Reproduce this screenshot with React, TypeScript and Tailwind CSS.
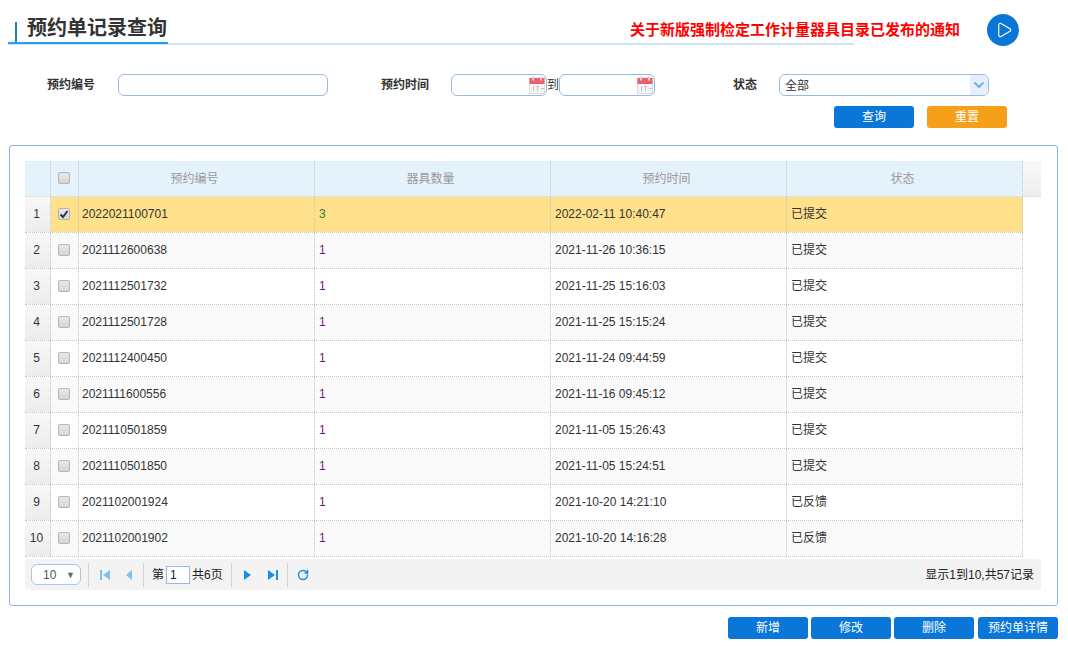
import { ChevronDown, Play, RotateCw } from 'lucide-react';

const rows = [
  ['2022021100701', '3', '2022-02-11 10:40:47', '已提交'],
  ['2021112600638', '1', '2021-11-26 10:36:15', '已提交'],
  ['2021112501732', '1', '2021-11-25 15:16:03', '已提交'],
  ['2021112501728', '1', '2021-11-25 15:15:24', '已提交'],
  ['2021112400450', '1', '2021-11-24 09:44:59', '已提交'],
  ['2021111600556', '1', '2021-11-16 09:45:12', '已提交'],
  ['2021110501859', '1', '2021-11-05 15:26:43', '已提交'],
  ['2021110501850', '1', '2021-11-05 15:24:51', '已提交'],
  ['2021102001924', '1', '2021-10-20 14:21:10', '已反馈'],
  ['2021102001902', '1', '2021-10-20 14:16:28', '已反馈'],
];

function CalendarIcon() {
  return (
    <svg viewBox="0 0 16 18" className="h-[18px] w-4 shrink-0">
      <rect x="0.5" y="2" width="15" height="15.5" fill="#f4f4f4" stroke="#dcdcdc" />
      <rect x="0.5" y="2" width="15" height="6" fill="#e8606c" />
      <rect x="3" y="0.5" width="2" height="4" fill="#f7c4c8" />
      <rect x="11" y="0.5" width="2" height="4" fill="#f7c4c8" />
      <rect x="4" y="10" width="1" height="5" fill="#c4c4c4" />
      <rect x="7" y="10" width="3" height="1" fill="#c4c4c4" />
      <rect x="8" y="11" width="1" height="4" fill="#c4c4c4" />
      <rect x="12" y="12" width="3" height="1" fill="#c4c4c4" />
    </svg>
  );
}

function DateInput() {
  return (
    <div className="flex h-[22px] w-24 items-center justify-end rounded-md border border-[#9ab8e6] bg-white">
      <CalendarIcon />
      <span className="w-px" />
    </div>
  );
}

function BlueButton({ label, className = 'bg-[#0a76d8]' }: { label: string; className?: string }) {
  return (
    <div className={`flex h-[22px] w-20 items-center justify-center rounded-[3px] text-xs text-white ${className}`}>
      {label}
    </div>
  );
}

function CheckBox({ checked = false }: { checked?: boolean }) {
  return (
    <div className="mr-0.5 mb-0.5 flex size-3 items-center justify-center rounded-[2px] border border-[#b4b4b4] bg-[linear-gradient(180deg,#e8e8e8,#d6d6d6)]">
      {checked && (
        <svg viewBox="0 0 10 10" className="size-2.5 shrink-0">
          <path d="M1.5 5.5 L4 8 L8.5 2" fill="none" stroke="#333" strokeWidth="2" />
        </svg>
      )}
    </div>
  );
}

function PagerIcon({ d, color }: { d: string; color: string }) {
  return (
    <svg viewBox="0 0 12 12" className="size-3" fill={color}>
      <path d={d} />
    </svg>
  );
}

function Sep() {
  return <div className="h-6 w-px bg-[#d4d4d4]" />;
}

export default function App() {
  return (
    <div className="h-[646px] w-[1068px] overflow-hidden bg-white text-xs text-[#333] [font-family:'Liberation_Sans','Noto_Sans_CJK_SC',sans-serif]">
      <div className="flex h-[58px] items-start">
        <div className="ml-2 mt-[15px] h-[30px] w-[846px] border-b-2 border-[#cfe6f7]">
          <div className="flex h-[29px] w-40 items-end border-b-2 border-[#25a0ee]">
            <span className="ml-[7px] h-[20px] w-0.5 bg-[#1c82c4]" />
            <span className="ml-2.5 text-xl leading-7 font-bold whitespace-nowrap text-[#333]">预约单记录查询</span>
          </div>
        </div>
        <div className="mt-[21px] -ml-[224px] w-[330px] text-[15px] leading-[18px] font-bold whitespace-nowrap text-[#ff0000]">
          关于新版强制检定工作计量器具目录已发布的通知
        </div>
        <div className="mt-[14px] ml-[27px] flex size-8 items-center justify-center rounded-full bg-[#0a76d8]">
          <Play className="ml-px size-[18px] text-white" strokeWidth={1.5} />
        </div>
      </div>

      <div className="mt-4 flex h-[22px] items-center">
        <span className="ml-[47px] w-[71px] font-bold">预约编号</span>
        <div className="h-[22px] w-[210px] rounded-md border border-[#9ab8e6]" />
        <span className="ml-[53px] w-[70px] font-bold">预约时间</span>
        <DateInput />
        <span className="w-3 text-center">到</span>
        <DateInput />
        <span className="ml-[78px] w-[46px] font-bold">状态</span>
        <div className="flex h-[22px] w-[210px] items-center justify-between rounded-md border border-[#9ab8e6] pl-[5px]">
          <span className="mt-0.5">全部</span>
          <span className="flex h-full w-[18px] items-center justify-center rounded-r-md bg-[#e6effb]">
            <ChevronDown className="size-4 text-[#6fb4ec]" strokeWidth={3} />
          </span>
        </div>
      </div>

      <div className="mt-[10px] flex h-[22px] gap-[13px] pl-[834px]">
        <BlueButton label="查询" />
        <BlueButton label="重置" className="bg-[#f6a01a]" />
      </div>

      <div className="mt-[17px] ml-[9px] h-[461px] w-[1049px] rounded-[3px] border border-[#8fb4e8] px-[15px] pt-[15px]">
        <div className="grid h-9 w-[1016px] grid-cols-[26px_28px_236px_236px_236px_236px_18px] border-b border-[#e2e2e2] text-[#999]">
          <div className="border-r border-dotted border-[#c4c4c4] bg-[#e4f2fb]" />
          <div className="flex items-center justify-center border-r border-dotted border-[#c4c4c4] bg-[#e4f2fb]">
            <CheckBox />
          </div>
          {['预约编号', '器具数量', '预约时间', '状态'].map((h) => (
            <div key={h} className="flex items-center justify-center border-r border-dotted border-[#c4c4c4] bg-[#e4f2fb] pr-1">
              {h}
            </div>
          ))}
          <div className="bg-[linear-gradient(180deg,#f9f9f9,#eeeeee)]" />
        </div>
        {rows.map((r, i) => {
          const bg = i === 0 ? 'bg-[#ffe08b]' : i % 2 === 1 ? 'bg-[#fafafa]' : 'bg-white';
          return (
            <div key={r[0]} className="grid h-9 w-[998px] grid-cols-[26px_28px_236px_236px_236px_236px] border-b border-dotted border-[#c4c4c4]">
              <div className="flex items-center justify-center border-r border-dotted border-[#c4c4c4] bg-[linear-gradient(180deg,#f8f8f8,#ececec)] pr-0.5 pb-0.5">
                {i + 1}
              </div>
              <div className={`flex items-center justify-center border-r border-dotted border-[#c4c4c4] ${bg}`}>
                <CheckBox checked={i === 0} />
              </div>
              <div className={`flex items-center border-r border-dotted border-[#c4c4c4] pb-0.5 pl-[3px] ${bg}`}>{r[0]}</div>
              <div className={`flex items-center border-r border-dotted border-[#c4c4c4] pb-0.5 pl-1 ${bg} ${i === 0 ? 'text-[#2e7d32]' : 'text-[#6f1a80]'}`}>
                {r[1]}
              </div>
              <div className={`flex items-center border-r border-dotted border-[#c4c4c4] pb-0.5 pl-1 ${bg}`}>{r[2]}</div>
              <div className={`flex items-center border-r border-dotted border-[#c4c4c4] pb-0.5 pl-1 ${bg}`}>{r[3]}</div>
            </div>
          );
        })}
        <div className="mt-[2px] flex h-[31px] w-[1016px] items-center rounded-[3px] bg-[#f3f3f3] pl-1.5 pr-[7px] text-[#222]">
          <div className="flex h-[21px] w-[50px] items-center justify-between rounded-md border border-[#a9c4ea] bg-white pl-[11px] pr-[5px] text-[#555]">
            <span>10</span>
            <span className="text-[9px] text-[#666]">▼</span>
          </div>
          <div className="ml-[7px]"><Sep /></div>
          <div className="ml-2.5 flex w-[30px] justify-between pr-0">
            <PagerIcon d="M1 1h2v10H1zM11 1v10L4 6z" color="#7fc1ee" />
          </div>
          <div className="-ml-1.5 mr-2">
            <PagerIcon d="M9 1v10L3 6z" color="#7fc1ee" />
          </div>
          <Sep />
          <span className="ml-2">第</span>
          <div className="ml-0.5 flex h-[18px] w-6 items-center border border-[#9ab8e6] bg-white pl-[3px]">1</div>
          <span className="ml-0.5">共6页</span>
          <div className="ml-2"><Sep /></div>
          <div className="ml-[9px]">
            <PagerIcon d="M3 1v10l7-5z" color="#1a8fe6" />
          </div>
          <div className="ml-3.5 mr-2">
            <PagerIcon d="M1 1v10l7-5zM9 1h2v10H9z" color="#1a8fe6" />
          </div>
          <Sep />
          <RotateCw className="ml-[9px] size-3 text-[#1a8fe6]" strokeWidth={3} />
          <span className="ml-auto">显示1到10,共57记录</span>
        </div>
      </div>

      <div className="mt-[11px] flex h-[22px] pl-[728px]">
        <BlueButton label="新增" />
        <div className="ml-[3px]"><BlueButton label="修改" /></div>
        <div className="ml-[3px]"><BlueButton label="删除" /></div>
        <div className="ml-1"><BlueButton label="预约单详情" /></div>
      </div>
    </div>
  );
}
